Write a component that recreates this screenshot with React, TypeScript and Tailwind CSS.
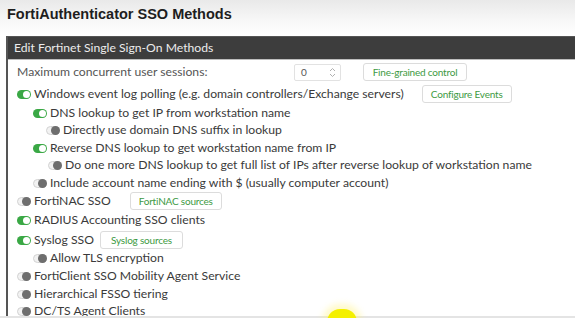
import React from 'react';

type Row = {
  label: string;
  on?: boolean;
  indent: number;
  h: number;
  button?: { text: string; ml: number; w: number };
};

function Toggle({ on }: { on?: boolean }) {
  if (on) {
    return (
      <span className="relative inline-block h-[9px] w-[14px] shrink-0 rounded-full bg-[#3aa845]">
        <span className="absolute right-[1px] top-[1px] h-[7px] w-[7px] rounded-full bg-white" />
      </span>
    );
  }
  return (
    <span className="relative inline-block h-[9px] w-[14px] shrink-0 rounded-full border border-[#d2d2d2] bg-[#f2f2f2]">
      <span className="absolute right-[-1px] top-[-1px] h-[9px] w-[9px] rounded-full bg-[#6e6e6e]" />
    </span>
  );
}

function GreenButton({ text, w }: { text: string; w: number }) {
  return (
    <span
      className="inline-flex h-[18px] items-center justify-center rounded-[3px] border border-[#dcdcdc] bg-white text-[10px] tracking-[-0.2px] text-[#3d9a43]"
      style={{ width: w }}
    >
      {text}
    </span>
  );
}

const rows: Row[] = [
  { label: 'Windows event log polling (e.g. domain controllers/Exchange servers)', on: true, indent: 17, h: 20, button: { text: 'Configure Events', ml: 18, w: 90 } },
  { label: 'DNS lookup to get IP from workstation name', on: true, indent: 33, h: 18 },
  { label: 'Directly use domain DNS suffix in lookup', indent: 46, h: 17 },
  { label: 'Reverse DNS lookup to get workstation name from IP', on: true, indent: 33, h: 18 },
  { label: 'Do one more DNS lookup to get full list of IPs after reverse lookup of workstation name', indent: 48, h: 17 },
  { label: 'Include account name ending with $ (usually computer account)', indent: 33, h: 18 },
  { label: 'FortiNAC SSO', indent: 17, h: 18, button: { text: 'FortiNAC sources', ml: 19, w: 92 } },
  { label: 'RADIUS Accounting SSO clients', on: true, indent: 17, h: 20 },
  { label: 'Syslog SSO', on: true, indent: 17, h: 20, button: { text: 'Syslog sources', ml: 6, w: 83 } },
  { label: 'Allow TLS encryption', indent: 33, h: 17 },
  { label: 'FortiClient SSO Mobility Agent Service', indent: 17, h: 18 },
  { label: 'Hierarchical FSSO tiering', indent: 17, h: 18 },
  { label: 'DC/TS Agent Clients', indent: 17, h: 16 },
];

export default function App() {
  return (
    <div className="relative h-[318px] w-[575px] overflow-hidden bg-[linear-gradient(180deg,#e9e9e9_0%,#f7f7f7_20px,#ffffff_36px)] font-['Lato',sans-serif] text-[12.2px] text-[#3a3a3a]">
      <div className="h-[36px] pl-[7px] pt-[4px] font-['Liberation_Sans',Arial,sans-serif] text-[14.5px] font-bold leading-[20px] text-[#1e1e1e]">
        FortiAuthenticator SSO Methods
      </div>

      <div className="ml-[6px] border-l-2 border-t border-[#555] bg-white">
        <div className="flex h-[23px] items-center border-b border-[#bdbdbd] bg-[#3d3d3d] pl-[6px] text-[12.2px] text-[#ececec]">
          Edit Fortinet Single Sign-On Methods
        </div>

        <div className="flex h-[24px] items-center pl-[9px] text-[#555]">
          <span className="w-[277px]">Maximum concurrent user sessions:</span>
          <span className="flex h-[17px] w-[47px] items-center justify-between rounded-[2px] border border-[#e2e2e2] pl-[6px] pr-[4px] text-[10px]">
            0
            <svg width="7" height="11" viewBox="0 0 7 11">
              <path d="M1 4 L3.5 1.5 L6 4" fill="none" stroke="#b0b0b0" strokeWidth="1" />
              <path d="M1 7 L3.5 9.5 L6 7" fill="none" stroke="#b0b0b0" strokeWidth="1" />
            </svg>
          </span>
          <span className="ml-[22px]">
            <GreenButton text="Fine-grained control" w={104} />
          </span>
        </div>

        {rows.map((r) => (
          <div
            key={r.label}
            className="flex items-center whitespace-nowrap"
            style={{ height: r.h, paddingLeft: r.indent - 8 }}
          >
            <Toggle on={r.on} />
            <span className="ml-[3px]">{r.label}</span>
            {r.button && (
              <span style={{ marginLeft: r.button.ml }}>
                <GreenButton text={r.button.text} w={r.button.w} />
              </span>
            )}
          </div>
        ))}
      </div>

      <div className="absolute bottom-0 left-0 h-[2px] w-full bg-[#e4e4e4]" />
      <div className="absolute left-[322px] top-[304px] h-[36px] w-[40px] rounded-full bg-[#fff27a] opacity-40 blur-[3px]" />
      <div className="absolute left-[327px] top-[309px] h-[26px] w-[30px] rounded-full bg-[#f4f000]" />
    </div>
  );
}
